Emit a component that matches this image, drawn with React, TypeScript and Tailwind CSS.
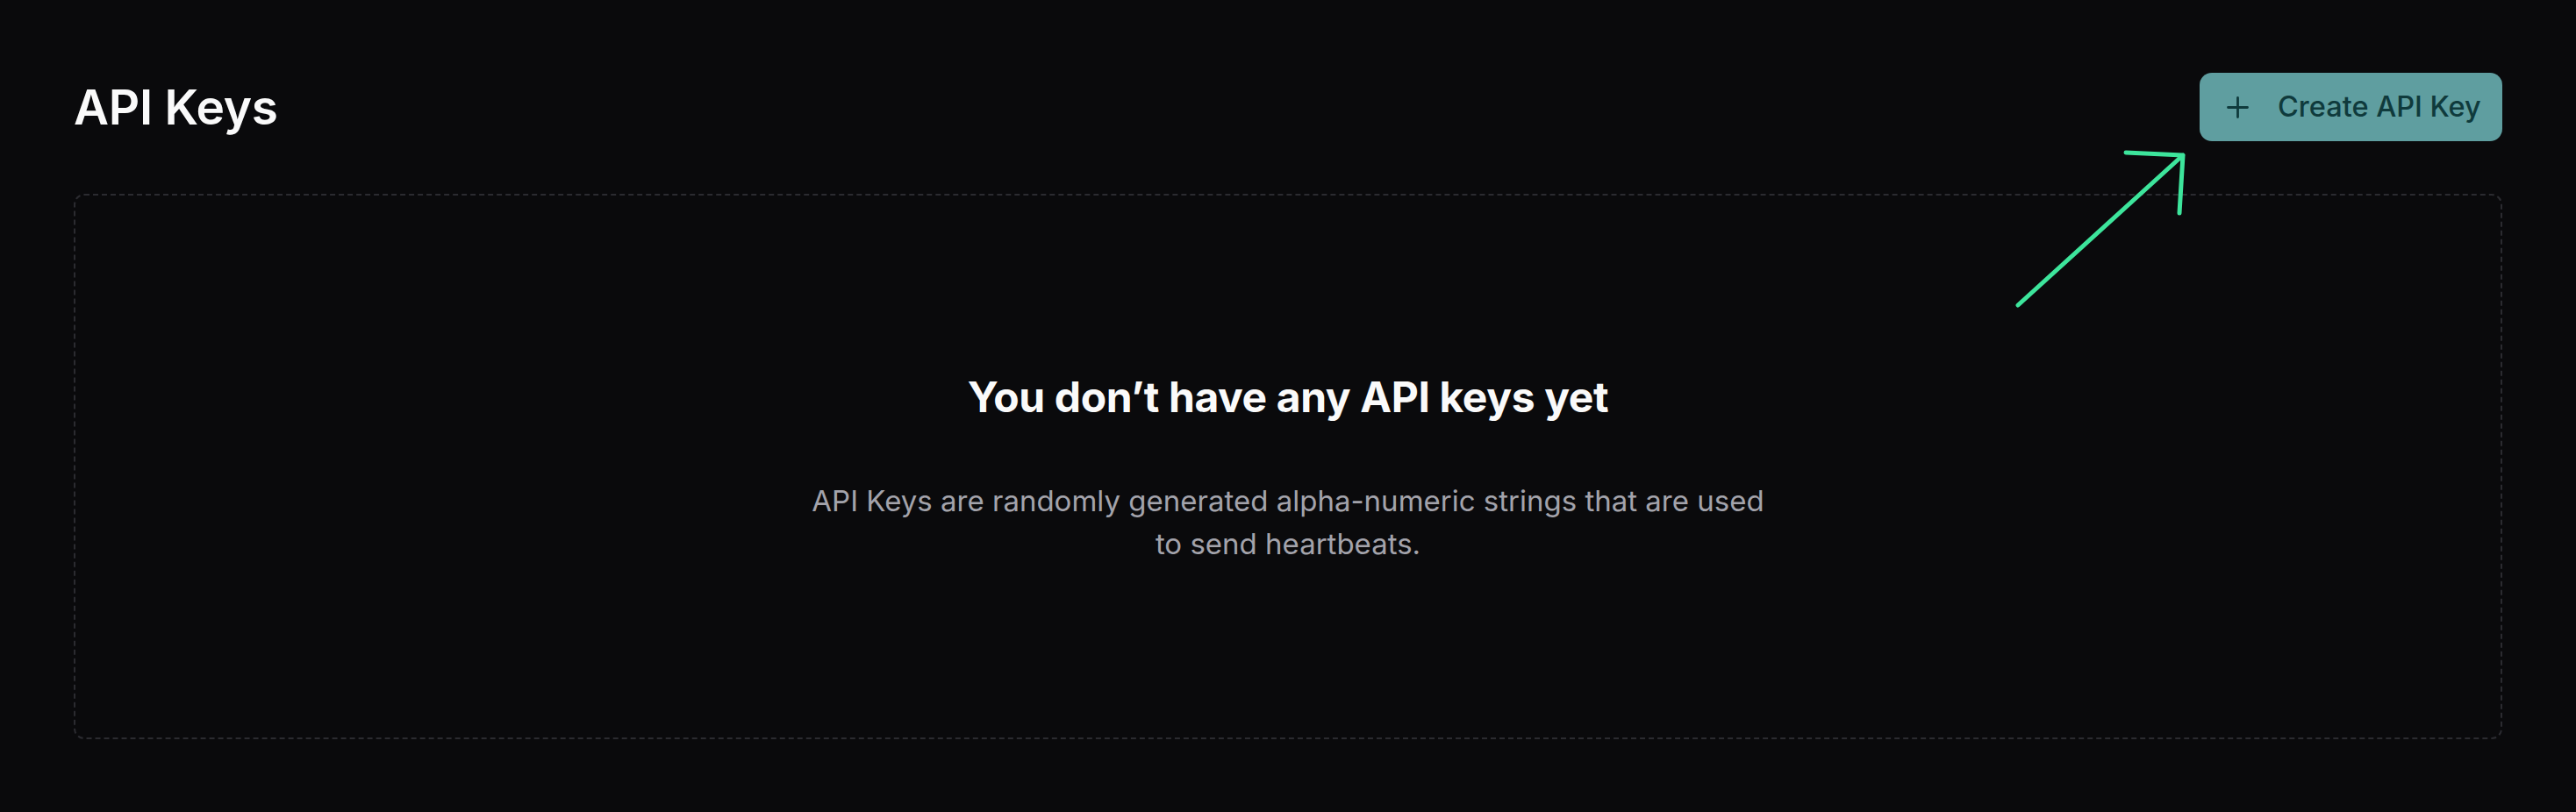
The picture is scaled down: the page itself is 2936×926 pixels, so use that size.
import React from "react";

function PlusIcon() {
  return (
    <svg width="25" height="25" viewBox="0 0 25 25" fill="none" className="shrink-0">
      <path d="M12.5 1.5V23.5M1.5 12.5H23.5" stroke="#0f3a3c" strokeWidth="2.8" strokeLinecap="round" />
    </svg>
  );
}

function Arrow() {
  return (
    <svg
      className="absolute left-[2290px] top-[165px] pointer-events-none"
      width="210"
      height="195"
      viewBox="0 0 210 195"
      fill="none"
    >
      <path
        d="M10 183L198 12M133 9L198 12L194 78"
        stroke="#3de59c"
        strokeWidth="5"
        strokeLinecap="round"
        strokeLinejoin="round"
      />
    </svg>
  );
}

export default function App() {
  return (
    <div
      className="relative min-h-[926px] w-full bg-[#0a0a0c] px-[84px] pt-[83px] pb-[83px]"
      style={{ fontFamily: "Inter, 'Noto Sans', sans-serif" }}
    >
      <div className="flex items-center justify-between h-[78px]">
        <h1 className="text-[55px] font-semibold leading-none text-[#fafafa] tracking-[-0.3px]">API Keys</h1>
        <button className="flex h-[78px] w-[345px] items-center gap-[33px] rounded-[14px] bg-[#5f9ea0] pl-[31px]">
          <PlusIcon />
          <span className="text-[32.5px] font-medium leading-none text-[#0f3a3c]">Create API Key</span>
        </button>
      </div>

      <div className="mt-[60px] flex h-[622px] flex-col items-center justify-center rounded-[12px] border-2 border-dashed border-[#2b2b30] pt-[5px] text-center">
        <h2 className="text-[48px] font-bold leading-[58px] text-[#fafafa] tracking-[-0.4px]">
          You don’t have any API keys yet
        </h2>
        <p className="mt-[65px] text-[33px] leading-[49px] text-[#a3a3ab]">
          API Keys are randomly generated alpha-numeric strings that are used
          <br />
          to send heartbeats.
        </p>
      </div>

      <Arrow />
    </div>
  );
}
